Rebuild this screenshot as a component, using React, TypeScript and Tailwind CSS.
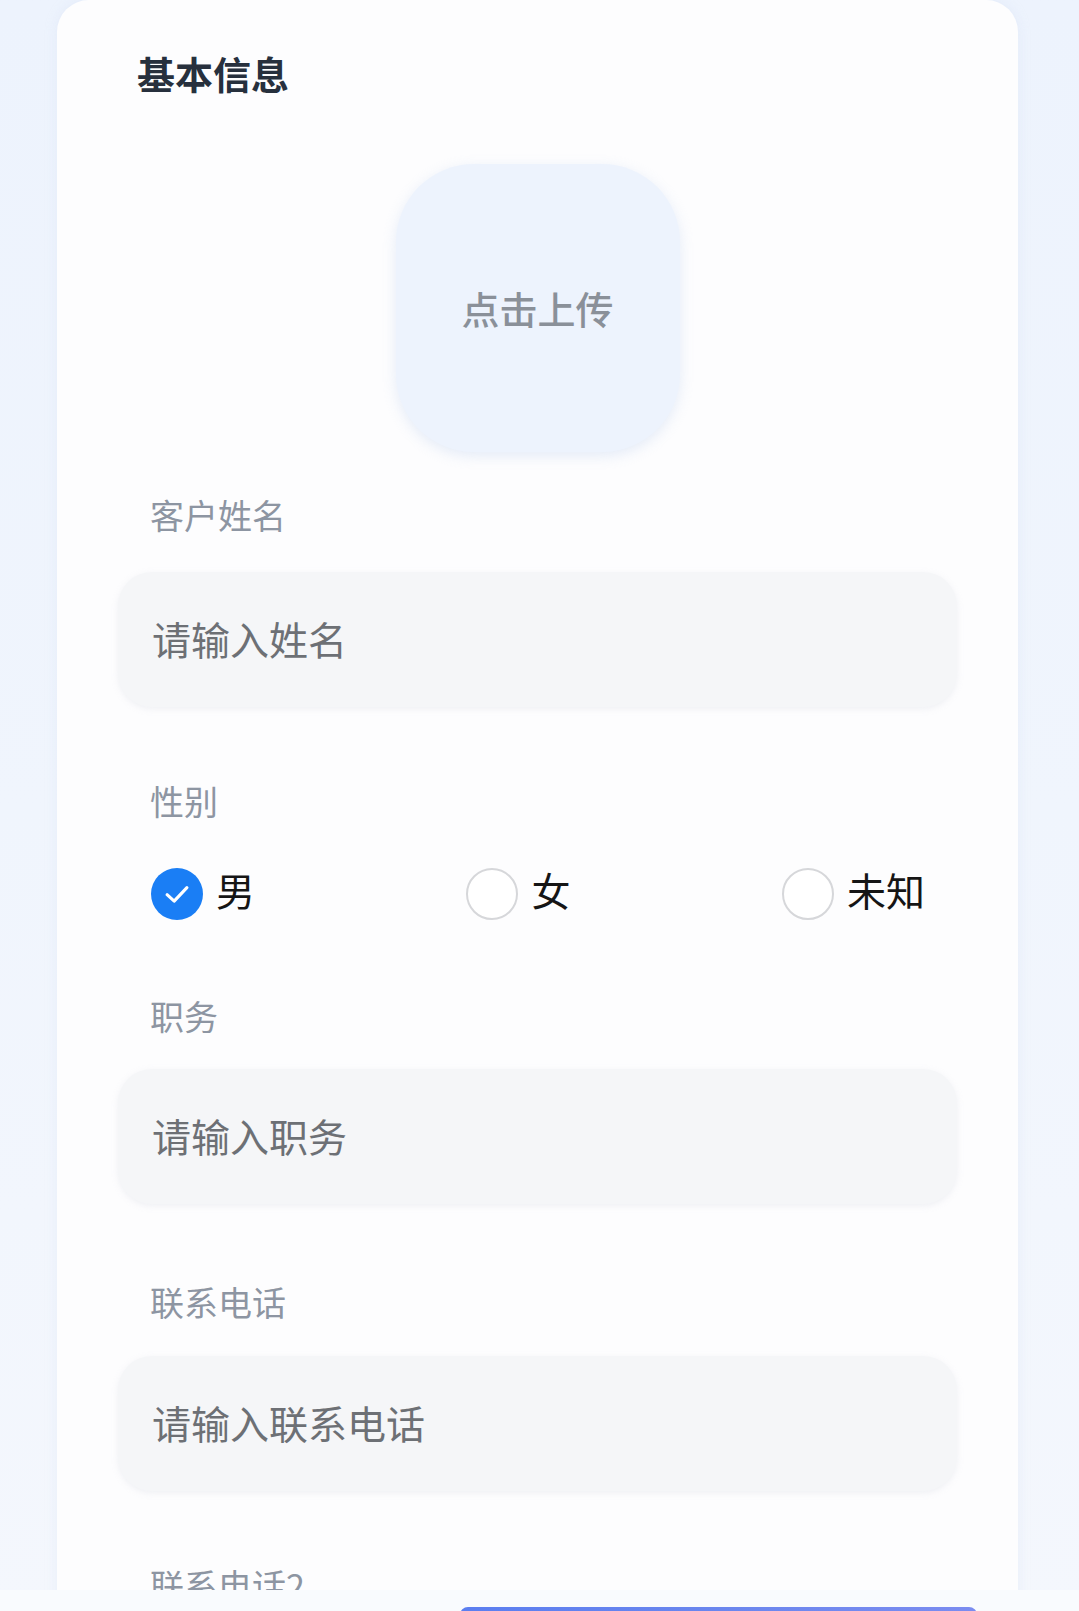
import React from "react";

const font = { fontFamily: '"Noto Sans CJK SC", "Noto Sans", sans-serif' };

function Label({ text, className = "" }: { text: string; className?: string }) {
  return (
    <div className={`ml-[32px] text-[34px] leading-none text-[#8d95a2] ${className}`}>{text}</div>
  );
}

function Input({ placeholder, className = "" }: { placeholder: string; className?: string }) {
  return (
    <div
      className={`h-[135px] rounded-[34px] bg-[#f5f6f8] shadow-[0_2px_6px_rgba(200,205,215,0.25)] flex items-center pl-[34px] ${className}`}
    >
      <span className="text-[39px] leading-none text-[#6d7075] mb-[2px]">{placeholder}</span>
    </div>
  );
}

function Radio({ label, checked }: { label: string; checked?: boolean }) {
  return (
    <div className="flex items-center gap-[13px]">
      {checked ? (
        <div className="w-[52px] h-[52px] rounded-full bg-[#1a7ef5] flex items-center justify-center">
          <svg width="34" height="34" viewBox="0 0 24 24" fill="none">
            <polyline points="5,12.5 10,17 19,7.5" stroke="white" strokeWidth="2.2" strokeLinecap="round" strokeLinejoin="round" />
          </svg>
        </div>
      ) : (
        <div className="w-[52px] h-[52px] rounded-full bg-white border-2 border-[#d6d7da]" />
      )}
      <span className="text-[39px] leading-none text-[#151515] mb-[9px]">{label}</span>
    </div>
  );
}

export default function App() {
  return (
    <div
      className="relative h-[1611px] w-full overflow-hidden bg-gradient-to-b from-[#edf3fd] via-[#f0f5fd] to-[#f4f7fd] pl-[57px] pr-[61px]"
      style={font}
    >
      <div className="rounded-[32px] bg-[#fdfdfe] shadow-[0_0_12px_rgba(210,220,240,0.35)] px-[61px] pt-[54px] pb-[80px]">
        <div className="ml-[19px] text-[38px] leading-none font-bold text-[#27303d]">基本信息</div>

        <div className="mt-[72px] flex justify-center">
          <div className="w-[284px] h-[288px] rounded-[78px] bg-[#edf3fd] shadow-[0_4px_14px_rgba(200,215,240,0.45)] flex items-center justify-center">
            <span className="text-[38px] leading-none font-medium text-[#8a9099]">点击上传</span>
          </div>
        </div>

        <Label text="客户姓名" className="mt-[46px]" />
        <Input placeholder="请输入姓名" className="mt-[40px]" />

        <Label text="性别" className="mt-[77px]" />
        <div className="mt-[50px] flex items-center justify-between pl-[33px] pr-[32px]">
          <Radio label="男" checked />
          <Radio label="女" />
          <Radio label="未知" />
        </div>

        <Label text="职务" className="mt-[79px]" />
        <Input placeholder="请输入职务" className="mt-[36px]" />

        <Label text="联系电话" className="mt-[81px]" />
        <Input placeholder="请输入联系电话" className="mt-[37px]" />

        <Label text="联系电话2" className="mt-[77px]" />
        <Input placeholder="请输入联系电话" className="mt-[37px]" />
      </div>

      <div className="absolute left-0 right-0 bottom-0 h-[21px] bg-[#f9fbfe]">
        <div className="absolute left-[460px] right-[102px] top-[17px] h-[10px] rounded-t-[8px] bg-gradient-to-r from-[#5b7ef0] via-[#6a86ee] to-[#7b8cf0]" />
      </div>
    </div>
  );
}
